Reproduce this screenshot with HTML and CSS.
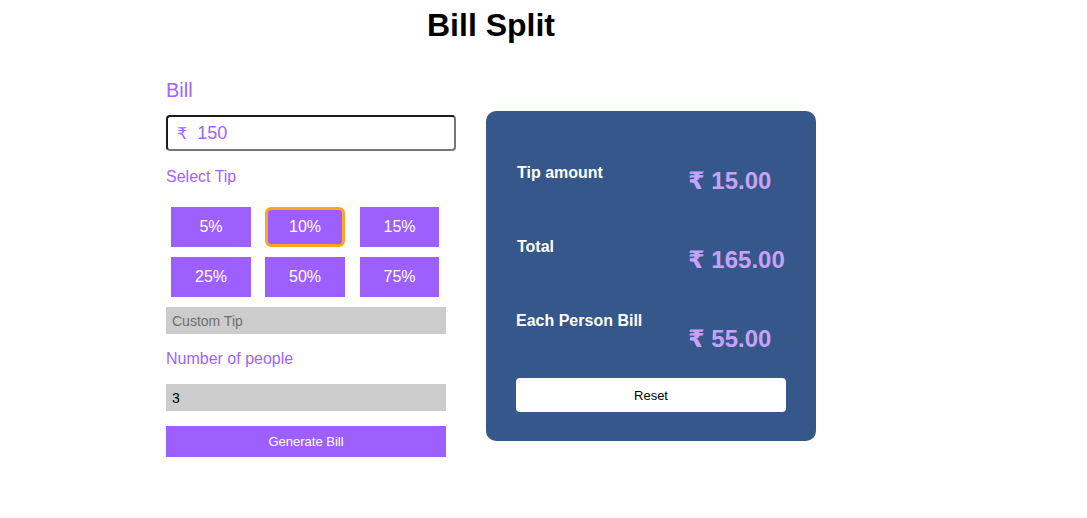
FILE: index.html
```html
<!DOCTYPE html>
<html>
<head>
<meta charset="utf-8">
<title>Bill Split</title>
<link rel="stylesheet" href="styles.css">
</head>
<body>
<div class="page">
  <h1 class="title">Bill Split</h1>
  <div class="main">
    <div class="form">
      <div class="label label--big">Bill</div>
      <div class="bill-input"><span class="rupee">₹</span><span>150</span></div>
      <div class="label label--tip">Select Tip</div>
      <div class="tips">
        <div class="tip">5%</div>
        <div class="tip tip--active">10%</div>
        <div class="tip">15%</div>
        <div class="tip">25%</div>
        <div class="tip">50%</div>
        <div class="tip">75%</div>
      </div>
      <div class="field field--custom placeholder">Custom Tip</div>
      <div class="label label--people">Number of people</div>
      <div class="field field--people">3</div>
      <div class="generate">Generate Bill</div>
    </div>
    <div class="card">
      <div class="row row--1">
        <div class="row-label">Tip amount</div>
        <div class="row-amount">₹ 15.00</div>
      </div>
      <div class="row row--2">
        <div class="row-label">Total</div>
        <div class="row-amount">₹ 165.00</div>
      </div>
      <div class="row row--3">
        <div class="row-label">Each Person Bill</div>
        <div class="row-amount">₹ 55.00</div>
      </div>
      <div class="reset">Reset</div>
    </div>
  </div>
</div>
</body>
</html>
```

FILE: styles.css
```css
* { box-sizing: border-box; }
html, body { margin: 0; padding: 0; background: #fff; }
body { font-family: "Liberation Sans", Arial, "DejaVu Sans", sans-serif; color: #000; }

.page {
  width: 650px;
  margin-left: 166px;
}

.title {
  margin: 7px 0 0;
  font-size: 32px;
  line-height: 37px;
  font-weight: bold;
  text-align: center;
}

.main {
  display: flex;
  gap: 30px;
  align-items: flex-start;
  margin-top: 34px;
}

.form {
  width: 290px;
  display: flex;
  flex-direction: column;
}

.label {
  color: #a064ff;
  font-size: 16px;
  line-height: 18px;
}
.label--big { font-size: 20px; line-height: 23px; margin-top: 1px; }
.label--tip { margin-top: 17px; }
.label--people { margin-top: 16px; }

.bill-input {
  margin-top: 13px;
  height: 36px;
  border: 2px solid;
  border-color: #1c1c1c #767676 #767676 #1c1c1c;
  border-radius: 4px;
  display: flex;
  align-items: center;
  gap: 10px;
  padding-left: 9px;
  color: #a064ff;
  font-size: 18px;
}
.rupee { font-family: "DejaVu Sans", sans-serif; font-size: 16px; }

.tips {
  margin-top: 21px;
  margin-left: 5px;
  display: grid;
  grid-template-columns: 80px 80px 80px;
  column-gap: 14px;
  row-gap: 10px;
}
.tip {
  height: 40px;
  background: #9d5ffd;
  color: #fff;
  font-size: 16px;
  display: flex;
  align-items: center;
  justify-content: center;
}
.tip:nth-child(3n) { margin-left: 1px; }
.tip--active {
  border: 3px solid #ffa41b;
  border-radius: 6px;
}

.field {
  width: 280px;
  height: 27px;
  background: #cccccc;
  font-size: 14px;
  display: flex;
  align-items: center;
  padding-left: 6px;
  color: #000;
}
.field--custom { margin-top: 10px; }
.placeholder { color: #6f6f6f; }
.field--people { margin-top: 16px; }

.generate {
  margin-top: 15px;
  width: 280px;
  height: 31px;
  background: #9d5ffd;
  color: #fff;
  font-size: 13px;
  display: flex;
  align-items: center;
  justify-content: center;
}

.card {
  width: 330px;
  height: 330px;
  margin-top: 33px;
  background: #35578a;
  border-radius: 10px;
  padding: 53px 30px 0 31px;
  display: flex;
  flex-direction: column;
}

.row {
  display: flex;
  align-items: flex-start;
  height: 74px;
}
.row--3 { height: 66px; }
.row-label {
  width: 171px;
  color: #fff;
  font-size: 16px;
  font-weight: bold;
  line-height: 18px;
}
.row-amount {
  color: #c8a2f8;
  font-size: 24px;
  font-weight: bold;
  line-height: 28px;
}
.row--1 .row-amount { margin-top: 3px; }
.row--2 .row-amount { margin-top: 8px; }
.row--3 .row-label { margin-left: -1px; margin-right: 1px; }
.row--3 .row-amount { margin-top: 13px; }

.reset {
  width: 270px;
  height: 34px;
  margin-left: -1px;
  background: #fff;
  border-radius: 4px;
  color: #000;
  font-size: 13px;
  display: flex;
  align-items: center;
  justify-content: center;
}
```
